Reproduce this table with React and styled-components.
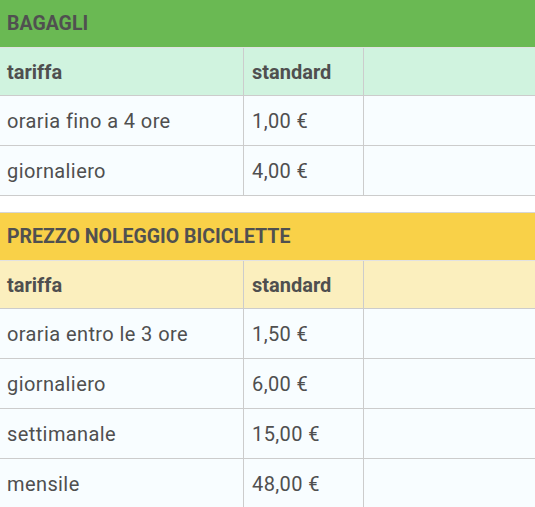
import React from 'react';
import styled, { createGlobalStyle } from 'styled-components';

const GlobalStyle = createGlobalStyle`
  body {
    margin: 0;
    background: #ffffff;
    font-family: "Roboto", "Liberation Sans", sans-serif;
    color: #4f4f4f;
  }
`;

const palette = {
  green: { title: '#6ab953', head: '#d0f3df' },
  yellow: { title: '#f9d148', head: '#fbefbe' },
};

const Section = styled.section`
  & + & {
    margin-top: 16px;
  }
`;

const Title = styled.h2`
  margin: 0;
  height: 47px;
  display: flex;
  align-items: center;
  padding-left: 7px;
  background: ${(p) => palette[p.tone].title};
  border-top: ${(p) => (p.tone === 'yellow' ? '1px solid #d6d6d6' : 'none')};
  border-bottom: 1px solid #e2e2e2;
  font-size: 19.5px;
  font-weight: 700;
  text-transform: uppercase;
  color: #505050;
`;

const Grid = styled.div`
  display: grid;
  grid-template-columns: 244px 120px 1fr;
`;

const Cell = styled.div`
  box-sizing: border-box;
  height: ${(p) => (p.head ? '48px' : '50px')};
  display: flex;
  align-items: center;
  padding-left: ${(p) => (p.first ? '7px' : '8px')};
  background: ${(p) => (p.head ? palette[p.tone].head : '#f8fdff')};
  border-bottom: 1px solid #cccccc;
  border-right: ${(p) => (p.last ? 'none' : '1px solid #cccccc')};
  font-size: 20px;
  font-weight: ${(p) => (p.head ? 700 : 400)};
  letter-spacing: ${(p) => (p.head ? '0' : '0.4px')};
  color: #4f4f4f;
`;

function PriceTable({ title, tone, rows }) {
  return (
    <Section>
      <Title tone={tone}>{title}</Title>
      <Grid>
        <Cell head first tone={tone}>tariffa</Cell>
        <Cell head tone={tone}>standard</Cell>
        <Cell head last tone={tone} />
        {rows.map(([label, price]) => (
          <React.Fragment key={label}>
            <Cell first>{label}</Cell>
            <Cell>{price}</Cell>
            <Cell last />
          </React.Fragment>
        ))}
      </Grid>
    </Section>
  );
}

export default function App() {
  return (
    <>
      <GlobalStyle />
      <PriceTable
        title="Bagagli"
        tone="green"
        rows={[
          ['oraria fino a 4 ore', '1,00 €'],
          ['giornaliero', '4,00 €'],
        ]}
      />
      <PriceTable
        title="Prezzo noleggio biciclette"
        tone="yellow"
        rows={[
          ['oraria entro le 3 ore', '1,50 €'],
          ['giornaliero', '6,00 €'],
          ['settimanale', '15,00 €'],
          ['mensile', '48,00 €'],
        ]}
      />
    </>
  );
}
